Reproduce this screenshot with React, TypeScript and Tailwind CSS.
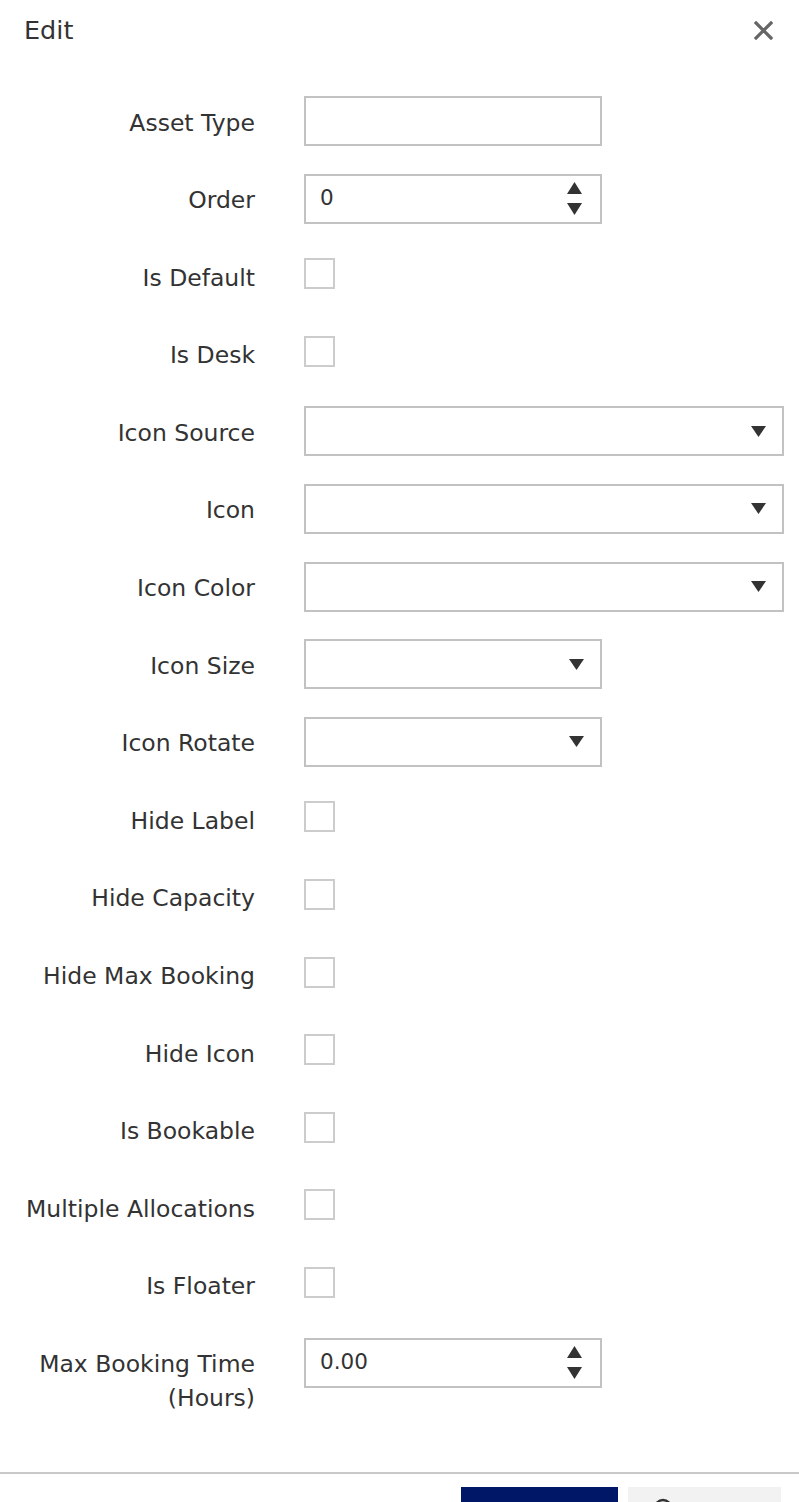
import React from 'react';

type Field =
  | { label: string; kind: 'text' }
  | { label: string; kind: 'number'; value: string }
  | { label: string; kind: 'check' }
  | { label: string; kind: 'select'; width: 'sm' | 'lg' };

const fields: Field[] = [
  { label: 'Asset Type', kind: 'text' },
  { label: 'Order', kind: 'number', value: '0' },
  { label: 'Is Default', kind: 'check' },
  { label: 'Is Desk', kind: 'check' },
  { label: 'Icon Source', kind: 'select', width: 'lg' },
  { label: 'Icon', kind: 'select', width: 'lg' },
  { label: 'Icon Color', kind: 'select', width: 'lg' },
  { label: 'Icon Size', kind: 'select', width: 'sm' },
  { label: 'Icon Rotate', kind: 'select', width: 'sm' },
  { label: 'Hide Label', kind: 'check' },
  { label: 'Hide Capacity', kind: 'check' },
  { label: 'Hide Max Booking', kind: 'check' },
  { label: 'Hide Icon', kind: 'check' },
  { label: 'Is Bookable', kind: 'check' },
  { label: 'Multiple Allocations', kind: 'check' },
  { label: 'Is Floater', kind: 'check' },
  { label: 'Max Booking Time (Hours)', kind: 'number', value: '0.00' },
];

const Caret = () => (
  <svg width="15" height="11" viewBox="0 0 15 11" className="shrink-0">
    <polygon points="0,0 15,0 7.5,11" fill="#333" />
  </svg>
);

const Spinner = () => (
  <div className="flex flex-col items-center gap-[9px]">
    <svg width="15" height="12" viewBox="0 0 15 12">
      <polygon points="7.5,0 15,12 0,12" fill="#333" />
    </svg>
    <svg width="15" height="12" viewBox="0 0 15 12">
      <polygon points="0,0 15,0 7.5,12" fill="#333" />
    </svg>
  </div>
);

const Control: React.FC<{ field: Field }> = ({ field }) => {
  switch (field.kind) {
    case 'check':
      return <div className="mt-[7px] h-[31px] w-[31px] border-2 border-[#cccccc] bg-white" />;
    case 'text':
      return <div className="h-[50px] w-[298px] border-2 border-[#c2c2c2] bg-white" />;
    case 'number':
      return (
        <div className="flex h-[50px] w-[298px] items-center justify-between border-2 border-[#c2c2c2] bg-white pl-[14px] pr-[18px]">
          <span className="text-[21.5px] text-[#333]">{field.value}</span>
          <Spinner />
        </div>
      );
    case 'select':
      return (
        <div
          className={`flex h-[50px] items-center justify-end border-2 border-[#c2c2c2] bg-white pr-[16px] ${
            field.width === 'lg' ? 'w-[480px]' : 'w-[298px]'
          }`}
        >
          <Caret />
        </div>
      );
  }
};

export default function App() {
  return (
    <div className="min-h-[1502px] w-[799px] bg-white text-[#333] [font-family:'DejaVu_Sans',sans-serif]">
      {/* Header */}
      <div className="flex h-[60px] items-center justify-between pl-6 pr-[26px]">
        <h1 className="mt-[2px] text-[25.5px] font-normal leading-none text-[#333]">Edit</h1>
        <svg width="19" height="19" viewBox="0 0 19 19">
          <path d="M2 2 L17 17 M17 2 L2 17" stroke="#666" strokeWidth="3.2" strokeLinecap="square" />
        </svg>
      </div>

      {/* Form */}
      <div className="flex flex-col gap-[27.6px] pl-6 pt-[36px]">
        {fields.map((f) => (
          <div key={f.label} className="flex min-h-[50px] items-start gap-[49px]">
            <label className="w-[233px] -ml-[2px] pt-[9.5px] text-right text-[23.5px] leading-[34px] text-[#333]">
              {f.label}
            </label>
            <Control field={f} />
          </div>
        ))}
      </div>

      {/* Footer */}
      <div className="mt-[56.5px] border-t-2 border-[#c8c8c8]">
        <div className="flex justify-end gap-[10px] pr-[18px] pt-[13px]">
          <button className="flex h-[50px] w-[157px] items-start justify-center gap-2 bg-[#001666] pt-[10px] text-[22px] leading-[30px] text-white">
            Save
          </button>
          <button className="flex h-[50px] w-[153px] items-start justify-center gap-2 bg-[#f2f2f2] pt-[10px] text-[22px] leading-[30px] text-[#333]">
            <svg width="20" height="20" viewBox="0 0 20 20" className="mt-[1px]">
              <circle cx="10" cy="10" r="8" fill="none" stroke="#333" strokeWidth="2.5" />
            </svg>
            Cancel
          </button>
        </div>
      </div>
    </div>
  );
}
